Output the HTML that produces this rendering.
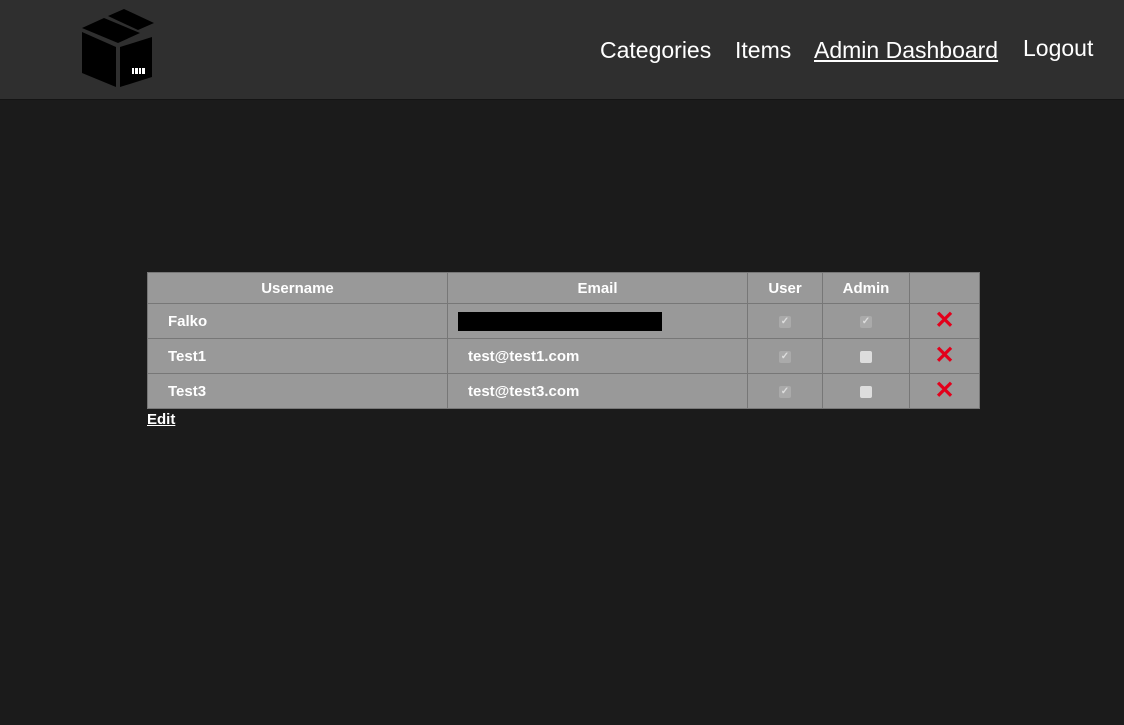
<!DOCTYPE html>
<html><head><style>
body{margin:0;width:1124px;height:725px;background:#1b1b1b;font-family:"Liberation Sans",sans-serif;overflow:hidden;position:relative;color:#fff}
.hdr{position:absolute;left:0;top:0;width:1124px;height:99px;background:#2f2f2f;border-bottom:1px solid #141414}
.nav{position:absolute;top:37px;font-size:23px;color:#fff;white-space:nowrap}
table{position:absolute;left:147px;top:272px;border-collapse:collapse;background:#999;font-size:15px;color:#fff}
td,th{border:1px solid #777;padding:0;height:34px;font-weight:bold}
th{height:30px;font-weight:bold}
td.l{padding-left:20px}
.cb{display:inline-block;width:12px;height:12px;border-radius:2px;background:#aaa;vertical-align:middle;color:#ddd;font-size:10px;line-height:12px;text-align:center}
.cb.e{background:#ddd}
.x{color:#e3001b;font-size:24px;font-weight:bold;line-height:20px}
</style></head><body>
<div class="hdr">
<svg style="position:absolute;left:80px;top:9px" width="74" height="78" viewBox="0 0 74 78">
<polygon points="2,23 36,38 36,78 2,64" fill="#000"/>
<polygon points="40,38 72,28 72,68 40,78" fill="#000"/>
<polygon points="2,19 24,9 60,24 38,34" fill="#000"/>
<polygon points="28,7 44,0 74,14 58,21" fill="#000"/>
<rect x="52" y="59" width="13" height="6" fill="#fff"/>
<rect x="54" y="59" width="1" height="6" fill="#000"/><rect x="58" y="59" width="1" height="6" fill="#000"/><rect x="61" y="59" width="1" height="6" fill="#000"/>
</svg>
<div class="nav" style="left:600px">Categories</div>
<div class="nav" style="left:735px">Items</div>
<div class="nav" style="left:814px;text-decoration:underline">Admin Dashboard</div>
<div class="nav" style="left:1023px;top:35px">Logout</div>
</div>
<table>
<tr><th style="width:299px">Username</th><th style="width:299px">Email</th><th style="width:74px">User</th><th style="width:86px">Admin</th><th style="width:69px"></th></tr>
<tr><td class="l">Falko</td><td style="padding-left:10px"><div style="width:204px;height:19px;background:#000"></div></td><td align="center"><span class="cb">✓</span></td><td align="center"><span class="cb">✓</span></td><td align="center"><span class="x">✕</span></td></tr>
<tr><td class="l">Test1</td><td class="l">test@test1.com</td><td align="center"><span class="cb">✓</span></td><td align="center"><span class="cb e"></span></td><td align="center"><span class="x">✕</span></td></tr>
<tr><td class="l">Test3</td><td class="l">test@test3.com</td><td align="center"><span class="cb">✓</span></td><td align="center"><span class="cb e"></span></td><td align="center"><span class="x">✕</span></td></tr>
</table>
<div style="position:absolute;left:147px;top:411px;font-size:15px;font-weight:bold;text-decoration:underline">Edit</div>
</body></html>
